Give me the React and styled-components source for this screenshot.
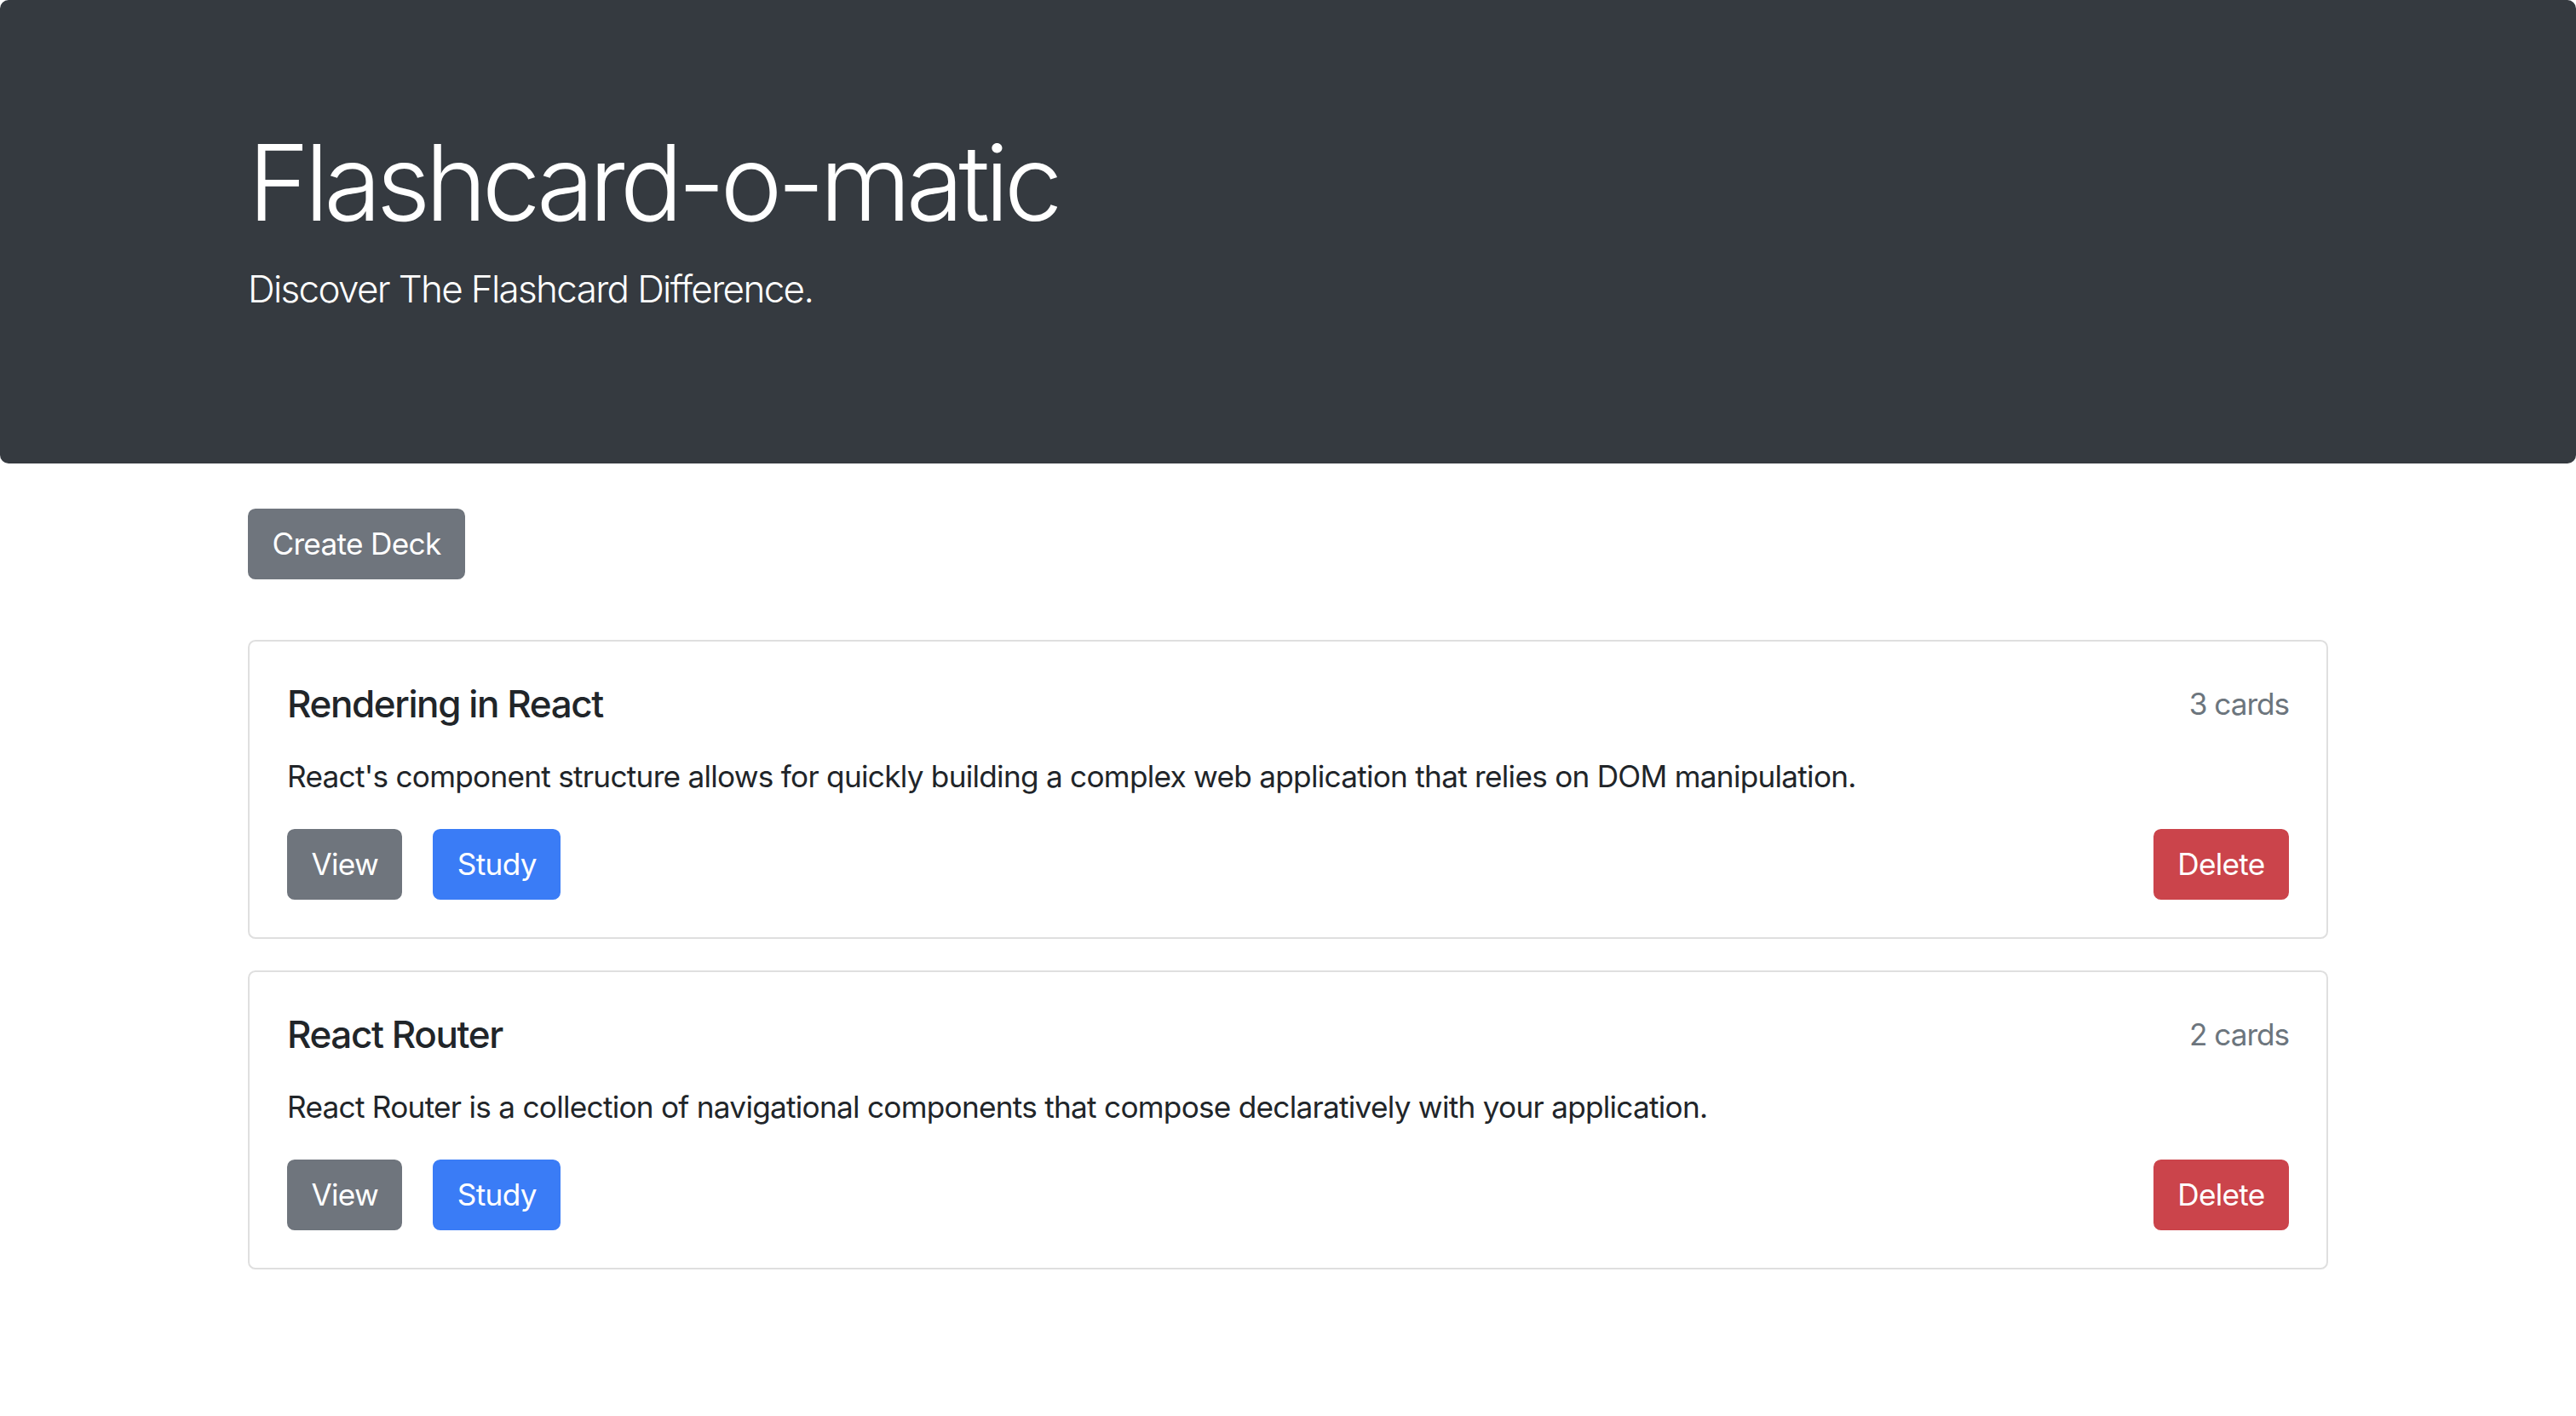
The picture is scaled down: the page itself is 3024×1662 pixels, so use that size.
import React from 'react';
import styled, { createGlobalStyle } from 'styled-components';

const GlobalStyle = createGlobalStyle`
  html, body {
    margin: 0;
    padding: 0;
    background: #ffffff;
  }
  body {
    font-family: Inter, "Liberation Sans", Arial, sans-serif;
    color: #212529;
    -webkit-font-smoothing: antialiased;
  }
  * {
    box-sizing: border-box;
  }
`;

const Jumbotron = styled.header`
  background: #353a40;
  color: #ffffff;
  padding: 141px 0 136px;
  border-radius: 10px;
`;

const Container = styled.div`
  width: 100%;
  max-width: 2508px;
  padding: 0 33px;
  margin: 0 auto;
`;

const Headline = styled.h1`
  font-size: 123.2px;
  font-weight: 300;
  line-height: 1.2;
  letter-spacing: -0.049em;
  margin: 0 0 17.6px;
`;

const Lead = styled.p`
  font-size: 44px;
  font-weight: 300;
  line-height: 1.5;
  letter-spacing: -0.038em;
  margin: 0 0 35.2px;
`;

const Main = styled(Container)`
  padding-top: 53px;
  padding-bottom: 120px;
`;

const colours = {
  secondary: '#6f757d',
  primary: '#3a7cf6',
  danger: '#cb444b',
};

const Button = styled.button`
  display: inline-block;
  font-family: inherit;
  font-size: 35.2px;
  font-weight: 400;
  line-height: 52.8px;
  letter-spacing: -0.02em;
  padding: 13.2px 26.4px;
  border: 2.2px solid ${(p) => colours[p.$variant]};
  border-radius: 8.8px;
  background: ${(p) => colours[p.$variant]};
  color: #ffffff;
  cursor: pointer;
  margin-left: ${(p) => (p.$push ? 'auto' : '0')};
`;

const DeckList = styled.div`
  margin-top: 71px;
  display: flex;
  flex-direction: column;
  gap: 37px;
`;

const Card = styled.article`
  border: 2.2px solid #dfdfdf;
  border-radius: 8.8px;
  padding: 44px;
  background: #ffffff;
`;

const CardHead = styled.div`
  display: flex;
  justify-content: space-between;
  align-items: flex-start;
  padding-top: 3px;
  margin-bottom: 32px;
`;

const CardTitle = styled.h5`
  font-size: 44px;
  font-weight: 500;
  line-height: 52.8px;
  letter-spacing: -0.032em;
  margin: 0;
`;

const Count = styled.small`
  font-size: 35.2px;
  line-height: 52.8px;
  color: #6c757d;
  letter-spacing: -0.03em;
`;

const Description = styled.p`
  font-size: 35.2px;
  line-height: 1.5;
  letter-spacing: -0.021em;
  margin: 0 0 35.2px;
`;

const Actions = styled.div`
  display: flex;
  align-items: center;
  gap: 36px;
`;

const decks = [
  {
    id: 1,
    name: 'Rendering in React',
    count: 3,
    description:
      "React's component structure allows for quickly building a complex web application that relies on DOM manipulation.",
  },
  {
    id: 2,
    name: 'React Router',
    count: 2,
    description:
      'React Router is a collection of navigational components that compose declaratively with your application.',
  },
];

function Deck({ name, count, description }) {
  return (
    <Card>
      <CardHead>
        <CardTitle>{name}</CardTitle>
        <Count>{count} cards</Count>
      </CardHead>
      <Description>{description}</Description>
      <Actions>
        <Button $variant="secondary">View</Button>
        <Button $variant="primary">Study</Button>
        <Button $variant="danger" $push>Delete</Button>
      </Actions>
    </Card>
  );
}

export default function App() {
  return (
    <>
      <GlobalStyle />
      <Jumbotron>
        <Container>
          <Headline>Flashcard-o-matic</Headline>
          <Lead>Discover The Flashcard Difference.</Lead>
        </Container>
      </Jumbotron>
      <Main>
        <Button $variant="secondary">Create Deck</Button>
        <DeckList>
          {decks.map((deck) => <Deck key={deck.id} {...deck} />)}
        </DeckList>
      </Main>
    </>
  );
}
